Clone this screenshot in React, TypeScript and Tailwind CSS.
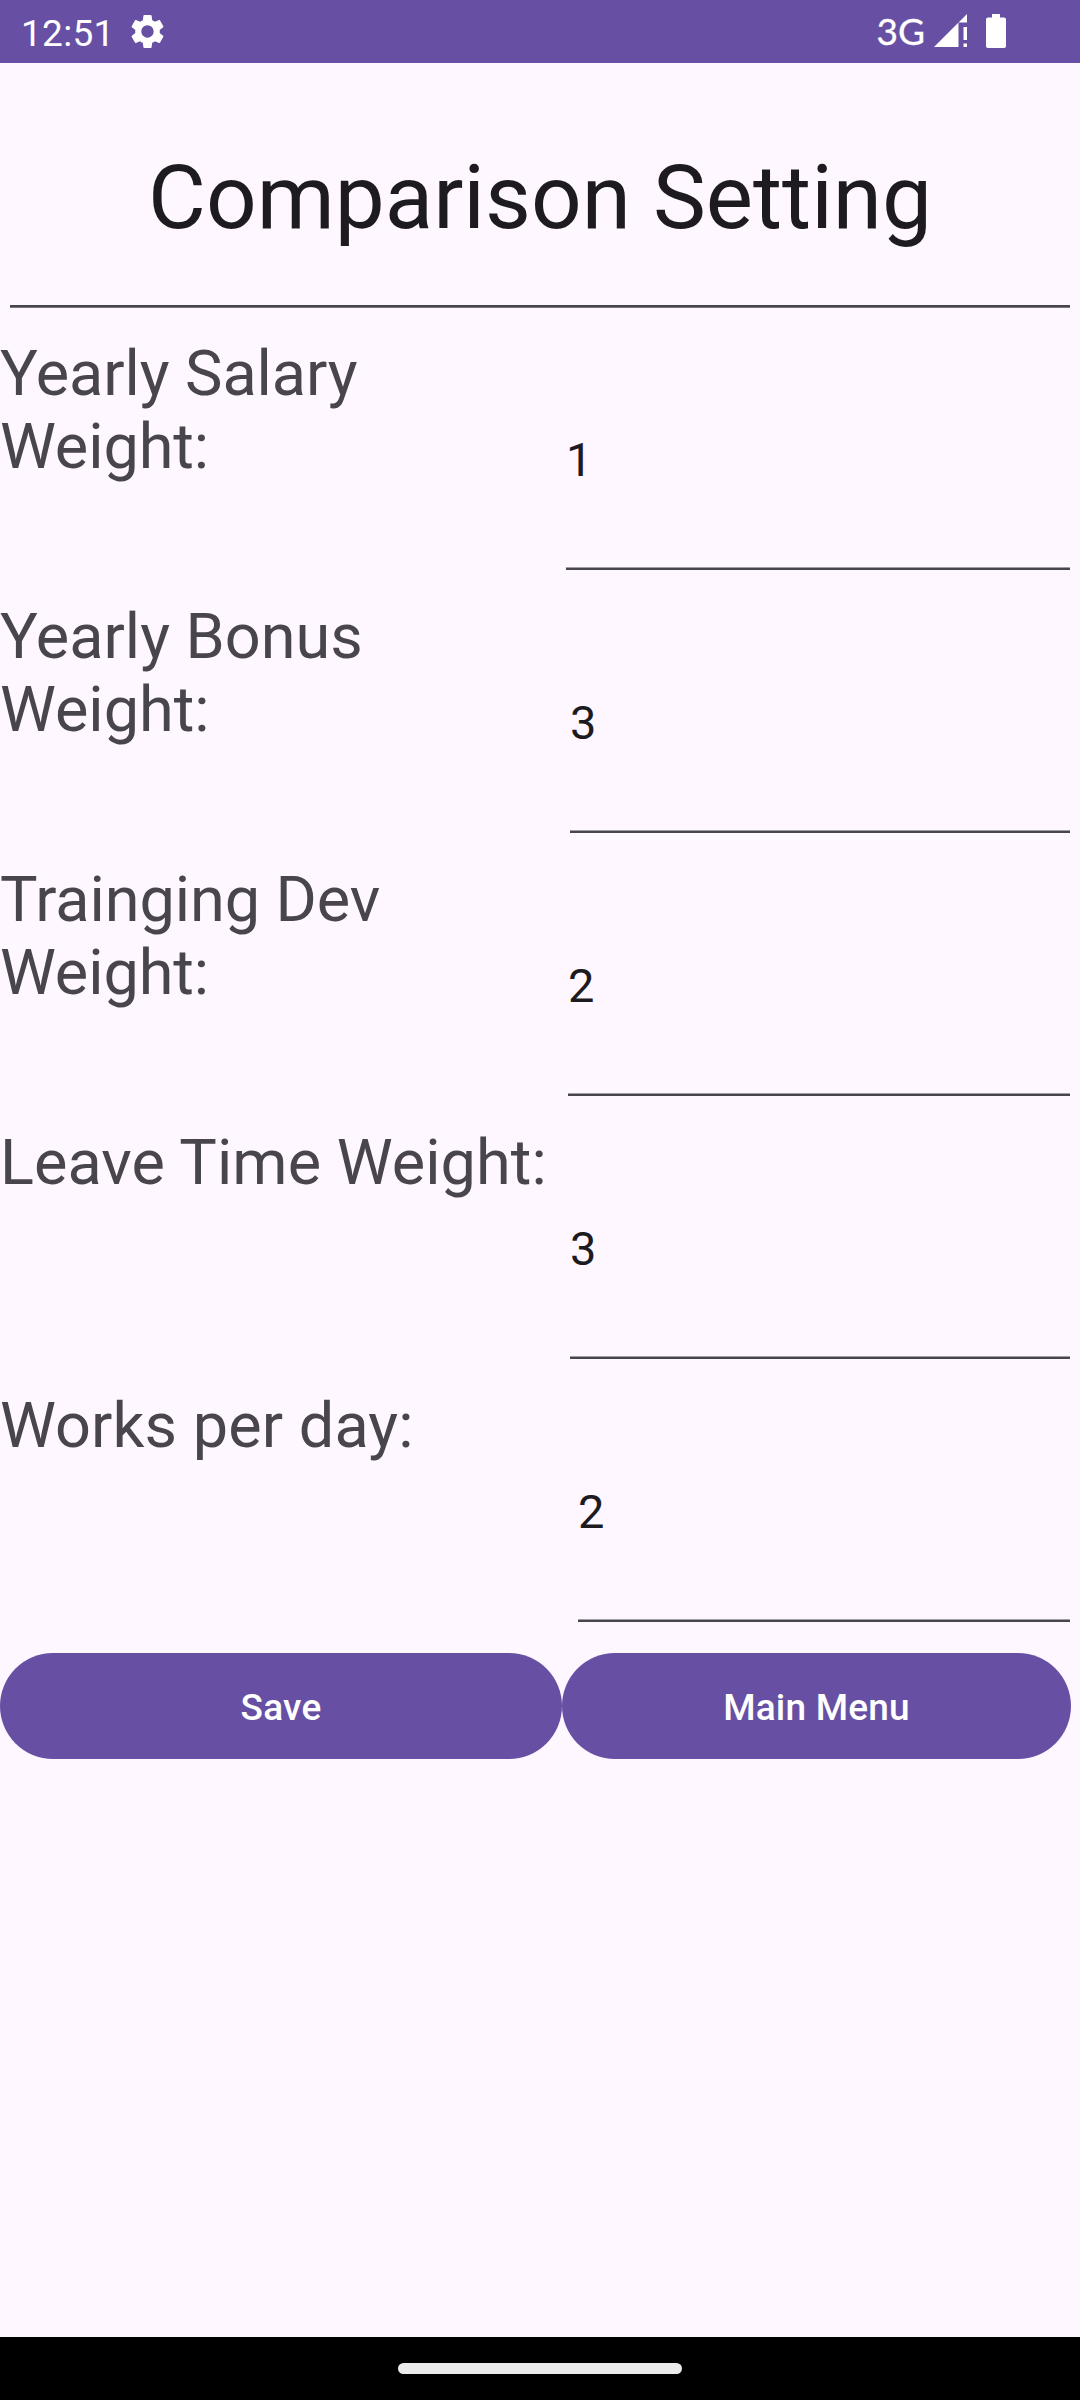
const rows = [
  { label: "Yearly Salary Weight:", value: "1", cell: "w-[504px]", tracking: "tracking-[-0.08px]" },
  { label: "Yearly Bonus Weight:", value: "3", cell: "w-[500px]", tracking: "tracking-normal" },
  { label: "Trainging Dev Weight:", value: "2", cell: "w-[502px]", tracking: "tracking-[-0.08px]" },
  { label: "Leave Time Weight:", value: "3", cell: "w-[500px]", tracking: "tracking-[0.05px]" },
  { label: "Works per day:", value: "2", cell: "w-[492px]", tracking: "tracking-[0.08px]" },
];

function StatusBar() {
  return (
    <header className="flex h-[63px] shrink-0 items-center bg-[#6750a4] text-white">
      <span className="ml-[21px] mt-[3px] text-[37px] leading-none tracking-[0.3px]">12:51</span>
      <svg className="ml-[12px] h-[41px] w-[41px]" viewBox="0 0 24 24" fill="currentColor">
        <path d="M19.14 12.94c.04-.3.06-.61.06-.94 0-.32-.02-.64-.07-.94l2.03-1.58c.18-.14.23-.41.12-.61l-1.92-3.32c-.12-.22-.37-.29-.59-.22l-2.39.96c-.5-.38-1.03-.7-1.62-.94l-.36-2.54c-.04-.24-.24-.41-.48-.41h-3.84c-.24 0-.43.17-.47.41l-.36 2.54c-.59.24-1.13.57-1.62.94l-2.39-.96c-.22-.08-.47 0-.59.22L2.74 8.87c-.12.21-.08.47.12.61l2.03 1.58c-.05.3-.09.63-.09.94s.02.64.07.94l-2.03 1.58c-.18.14-.23.41-.12.61l1.92 3.32c.12.22.37.29.59.22l2.39-.96c.5.38 1.03.7 1.62.94l.36 2.54c.05.24.24.41.48.41h3.84c.24 0 .44-.17.47-.41l.36-2.54c.59-.24 1.13-.56 1.62-.94l2.39.96c.22.08.47 0 .59-.22l1.92-3.32c.12-.22.07-.47-.12-.61l-2.01-1.58zM12 15.6c-1.98 0-3.6-1.62-3.6-3.6s1.62-3.6 3.6-3.6 3.6 1.62 3.6 3.6-1.62 3.6-3.6 3.6z" />
      </svg>
      <span className="mb-[2px] ml-auto font-[Lato,sans-serif] text-[37px] leading-none [-webkit-text-stroke:0.3px_white]">3G</span>
      <svg className="ml-[9px] h-[33px] w-[33px] -translate-y-px" viewBox="0 0 33 33" fill="currentColor">
        <path d="M0 33 24.500 8.500V33zM33 0V8.500H24.500zM29.500 13H33V26H29.500zM29.500 29.500H33V33H29.500z" />
      </svg>
      <svg className="ml-[19px] mr-[74px] h-[34px] w-[20px] -translate-y-px" viewBox="0 0 20 34" fill="currentColor">
        <path d="M6 0h8v3.500h4a2 2 0 0 1 2 2V32a2 2 0 0 1-2 2H2a2 2 0 0 1-2-2V5.500a2 2 0 0 1 2-2h4z" />
      </svg>
    </header>
  );
}

export default function App() {
  return (
    <div className="flex h-[2400px] w-[1080px] flex-col overflow-hidden bg-[#fef7ff] font-[Roboto,sans-serif]">
      <StatusBar />
      <main className="flex-1">
        <h1 className="flex h-[242px] items-center justify-center pt-[27px] text-[89px] leading-none text-[#1d1b20]">
          Comparison Setting
        </h1>
        <div className="mx-[10px] h-[3px] border-b border-[#77737c] bg-[#49454f]" />
        <div className="pt-[10px]">
          {rows.map((r) => (
            <section key={r.label} className="flex h-[263px] justify-between pr-[10px] pt-[19px]">
              <h2 className={`${r.tracking} w-[550px] text-[63px] leading-[73px] text-[#49454f]`}>{r.label}</h2>
              <div className={`${r.cell} flex h-[233px] flex-col justify-between pt-[95px] text-[47px] leading-[55px] text-[#1d1b20]`}>
                <span>{r.value}</span>
                <div className="h-[3px] border-t border-[#a09ca4] bg-[#49454f]" />
              </div>
            </section>
          ))}
        </div>
        <div className="flex pt-[20px] text-[37px] font-medium tracking-[0.2px] text-white">
          <button className="h-[106px] w-[562px] shrink-0 rounded-full bg-[#6750a4] pt-[3px]">Save</button>
          <button className="h-[106px] w-[509px] shrink-0 rounded-full bg-[#6750a4] pt-[3px]">Main Menu</button>
        </div>
      </main>
      <footer className="flex h-[63px] shrink-0 items-center justify-center bg-black">
        <div className="h-[11px] w-[284px] rounded-full bg-[#ebebeb]" />
      </footer>
    </div>
  );
}
